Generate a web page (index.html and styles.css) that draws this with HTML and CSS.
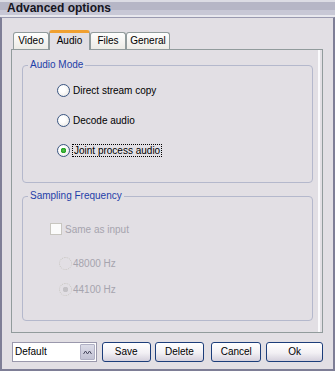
FILE: index.html
```html
<!DOCTYPE html>
<html lang="en">
<head>
    <meta charset="UTF-8">
    <title>Advanced options</title>
    <link rel="stylesheet" href="styles.css">
</head>
<body>
    <div class="window">
        <div class="titlebar">Advanced options</div>

        <div class="frame">
            <!-- Tabs -->
            <div class="tabs">
                <div class="tab tab-video">Video</div>
                <div class="tab tab-audio active">Audio</div>
                <div class="tab tab-files">Files</div>
                <div class="tab tab-general">General</div>
            </div>

            <div class="panel">
                <!-- Audio mode -->
                <fieldset class="group group-mode">
                    <legend>Audio Mode</legend>
                    <div class="options">
                        <div class="option"><span class="radio"></span><span>Direct stream copy</span></div>
                        <div class="option"><span class="radio"></span><span>Decode audio</span></div>
                        <div class="option"><span class="radio checked"></span><span class="focus">Joint process audio</span></div>
                    </div>
                </fieldset>

                <!-- Sampling frequency (disabled) -->
                <fieldset class="group group-freq">
                    <legend>Sampling Frequency</legend>
                    <div class="freq">
                        <div class="option same-input"><span class="checkbox"></span><span>Same as input</span></div>
                        <div class="option rate rate-48"><span class="radio off"></span><span>48000 Hz</span></div>
                        <div class="option rate rate-44"><span class="radio off checked"></span><span>44100 Hz</span></div>
                    </div>
                </fieldset>
            </div>

            <!-- Bottom row -->
            <div class="footer">
                <div class="combo">
                    <span class="combo-text">Default</span>
                    <span class="combo-btn">
                        <svg viewBox="0 0 9 5" width="9" height="5">
                            <polyline points="0.5,4 2.5,1 4.5,4 6.5,1 8.5,4" fill="none" stroke="#4a4a60" stroke-width="1"/>
                        </svg>
                    </span>
                </div>
                <div class="btn btn-save">Save</div>
                <div class="btn btn-delete">Delete</div>
                <div class="btn btn-cancel">Cancel</div>
                <div class="btn btn-ok">Ok</div>
            </div>
        </div>
    </div>
</body>
</html>
```

FILE: styles.css
```css
* {
    margin: 0;
    padding: 0;
    box-sizing: border-box;
}

body {
    width: 335px;
    height: 371px;
    overflow: hidden;
    background: #e2dfe4;
    font-family: 'Liberation Sans', Arial, sans-serif;
    font-size: 10px;
    color: #000;
}

.window {
    height: 371px;
    display: flex;
    flex-direction: column;
}

/* Title bar */
.titlebar {
    height: 17px;
    padding-left: 7px;
    font-size: 12px;
    font-weight: bold;
    line-height: 17px;
    color: #14141e;
    background: linear-gradient(#dcdce4 0, #dcdce4 2px, #b6b6c6 2px, #b6b6c6 10px, #c8c8d6 10px, #c8c8d6 15px, #e8e8ee 15px);
}

.frame {
    flex: 1;
    border: 2px solid #7e7e96;
    border-top: 1px solid #9a9ab0;
    padding: 12px 10px 0 9px;
}

/* Tabs */
.tabs {
    display: flex;
    align-items: flex-end;
    height: 19px;
    padding-left: 2px;
    position: relative;
    z-index: 1;
}

.tab {
    height: 17px;
    border: 1px solid #919b9c;
    border-bottom: none;
    border-radius: 3px 3px 0 0;
    background: linear-gradient(#fefefe, #ecebe6);
    text-align: center;
    line-height: 15px;
}

.tab-video { width: 36px; }
.tab-audio { width: 41px; }
.tab-files { width: 36px; }
.tab-general { width: 44px; }

.tab.active {
    height: 20px;
    margin-bottom: -1px;
    border-top: 3px solid #f0a030;
    background: #e2dfe4;
}

/* Tab panel */
.panel {
    height: 284px;
    border: 1px solid #919b9c;
    box-shadow: inset -2px 0 0 #e2dfe4, inset -4px 0 0 #fafafc;
    padding: 9px 9px 0 10px;
}

.group {
    border: 1px solid #b4b8cc;
    border-radius: 4px;
    padding: 0 0 0 5px;
    min-width: 0;
}

.group legend {
    padding: 0 2px;
    line-height: 12px;
    color: #1e3ea8;
}

.group-mode {
    height: 124px;
}

.group-freq {
    height: 131px;
    margin-top: 7px;
}

.options {
    display: flex;
    flex-direction: column;
    gap: 17px;
    padding-top: 13px;
    margin-left: 29px;
}

.option {
    display: flex;
    align-items: center;
    height: 13px;
    gap: 3px;
}

.radio {
    width: 13px;
    height: 13px;
    border: 1px solid #3a5682;
    border-radius: 50%;
    background: radial-gradient(circle at 40% 40%, #ffffff 30%, #e4e2dc 100%);
    flex-shrink: 0;
}

.radio.checked {
    background: radial-gradient(circle, #58c050 0, #21a121 2.5px, transparent 3px),
                radial-gradient(circle at 40% 40%, #ffffff 30%, #e4e2dc 100%);
}

.focus {
    outline: 1px dotted #000;
    padding: 0 1px;
}

/* Disabled group */
.freq {
    padding-top: 21px;
    color: #a6a4ae;
}

.same-input {
    height: 12px;
    margin-left: 22px;
}

.checkbox {
    width: 12px;
    height: 12px;
    border: 1px solid #c8c6c0;
    background: #fbfbfb;
}

.rate {
    margin-left: 31px;
    gap: 1px;
}

.rate-48 { margin-top: 22px; }
.rate-44 { margin-top: 13px; }

.radio.off {
    border: 1px dotted #c8c6c0;
    background: #e2dfe4;
}

.radio.off.checked {
    background: radial-gradient(circle, #c4c2c6 0, #c4c2c6 2.5px, transparent 3px), #e2dfe4;
}

/* Footer */
.footer {
    display: flex;
    margin-top: 9px;
    margin-left: 1px;
}

.combo {
    display: flex;
    width: 85px;
    height: 20px;
    border: 1px solid #9a98ac;
    background: #fff;
}

.combo-text {
    flex: 1;
    padding-left: 2px;
    line-height: 18px;
}

.combo-btn {
    width: 15px;
    margin: 1px;
    border: 1px solid #b0b0c4;
    border-radius: 1px;
    background: linear-gradient(#dcdce8, #c2c2d4);
    display: flex;
    align-items: center;
    justify-content: center;
}

.btn {
    height: 20px;
    border: 1px solid #1c3d7a;
    border-radius: 3px;
    background: linear-gradient(#ffffff, #f2f0f4 55%, #d4d0dc);
    text-align: center;
    line-height: 18px;
}

.btn-save { width: 49px; margin-left: 5px; }
.btn-delete { width: 50px; margin-left: 4px; }
.btn-cancel { width: 50px; margin-left: 7px; }
.btn-ok { width: 57px; margin-left: 5px; }
```
